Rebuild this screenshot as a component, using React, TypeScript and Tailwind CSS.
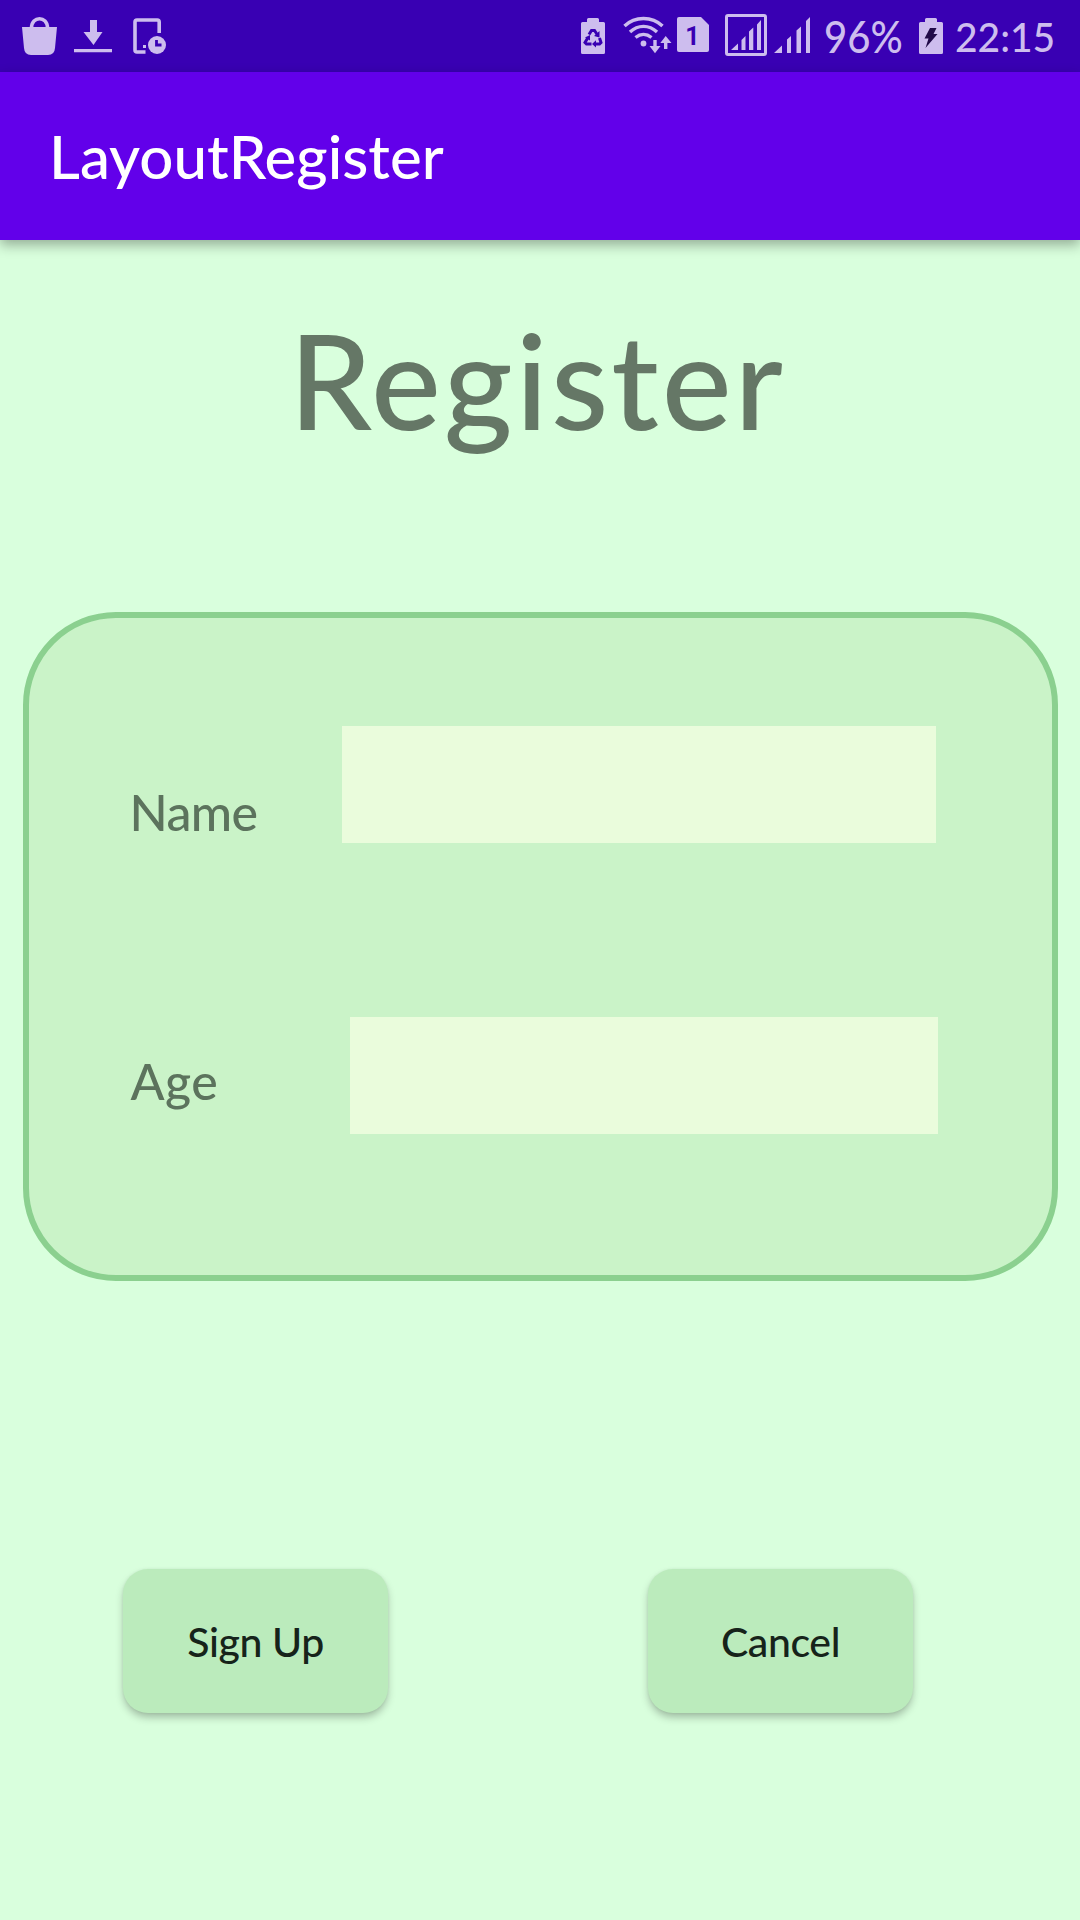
import type { ReactNode } from "react";

// Every status icon shares the bar's 72px height; x and w give its horizontal span.
function StatusIcon({ x, w, className = "", children }: { x: number; w: number; className?: string; children: ReactNode }) {
  return (
    <svg width={w} height={72} viewBox={`${x} 0 ${w} 72`} fill="currentColor" className={`shrink-0 ${className}`} aria-hidden="true">
      {children}
    </svg>
  );
}

const BATTERY = "M587 19.5Q587 18 588.500 18H597.500Q599 18 599 19.500V22H603.500Q605 22 605 23.500V52.500Q605 54 603.500 54H582.500Q581 54 581 52.500V23.500Q581 22 582.500 22H587Z";

function StatusBar() {
  return (
    <header className="flex h-[72px] shrink-0 items-center bg-[#3900b3] text-[#cdbdee]">
      <StatusIcon x={22} w={35} className="ml-[22px]">
        <path d="M22 27H57L55 48Q54.500 55 48 55H31Q24.500 55 24 48Z" />
        <path d="M31.500 28C31.500 15.500 47.500 15.500 47.500 28" fill="none" stroke="currentColor" strokeWidth="3.500" />
      </StatusIcon>
      <StatusIcon x={74} w={38} className="ml-[17px]">
        <path d="M90 20H97V32H102.500L93.500 45L83.500 32H90ZM74 49H112V52.300H74Z" />
      </StatusIcon>
      <StatusIcon x={133} w={33} className="ml-[21px]">
        <path d="M159.200 33V22Q159.200 20 157.200 20H137Q135 20 135 22V50Q135 52 137 52H145.500" fill="none" stroke="currentColor" strokeWidth="3.600" />
        <rect x="143" y="45" width="3" height="3" />
        <circle cx="157" cy="45" r="9" />
        <path d="M156.500 40V45H161.500" fill="none" stroke="#3900b3" strokeWidth="2.800" />
      </StatusIcon>

      <StatusIcon x={581} w={24} className="ml-auto">
        <path d={BATTERY} />
        <g fill="none" stroke="#3900b3" strokeWidth="3">
          <path d="M589 34.500L591.500 30.500H594.500L597.500 35" />
          <path d="M599.500 38L601 42.500L599.500 44H594.500" />
          <path d="M591.500 44H586.500L585 42.500L588 37.500" />
        </g>
        <path d="M599.500 31V37.500L594 36ZM596 40.300V47.500L592 44ZM585 37.500L590 35V40.500Z" fill="#3900b3" />
      </StatusIcon>
      <StatusIcon x={623} w={49} className="ml-[18px]">
        <g fill="none" stroke="currentColor" strokeWidth="3.400">
          <path d="M624.500 26C635 16 652 16 662.500 26" />
          <path d="M630 32C638 24.500 649 24.500 657 32" />
          <path d="M635.500 37.500C640.500 33.500 646.500 33.500 651.500 37.500" />
          <path d="M655 40V49M665.700 49V40" />
        </g>
        <circle cx="643.500" cy="43.500" r="2.900" />
        <path d="M649.500 46H660.500L655 53.200ZM660.300 43H671.500L665.700 36Z" />
      </StatusIcon>
      <StatusIcon x={677} w={32} className="ml-[5px]">
        <path d="M679 17H701L709 25V50Q709 52 707 52H679Q677 52 677 50V19Q677 17 679 17Z" />
        <text x="692.500" y="44.500" textAnchor="middle" fill="#3900b3" fontFamily="Roboto, sans-serif" fontWeight="700" fontSize="25">1</text>
      </StatusIcon>
      <StatusIcon x={725} w={42} className="ml-[16px]">
        <rect x="726.500" y="15.500" width="39" height="39" rx="1.500" fill="none" stroke="currentColor" strokeWidth="3" />
        <path d="M731 50L738 43.500V50ZM741.500 40L745.500 36V50H741.500ZM749 31.500L753.300 27.500V50H749ZM757 24.500L761 20V50H757Z" />
      </StatusIcon>
      <StatusIcon x={774} w={36} className="ml-[7px]">
        <path d="M774 53L782 45.500V53ZM787 39.500L791 36V53H787ZM796.500 30.500L801 26.500V53H796.500ZM806 21L810 17V53H806Z" />
      </StatusIcon>
      <span className="ml-[14px] w-[80px] text-[45px] leading-[45px] font-medium whitespace-nowrap">
        <span className="inline-block origin-left scale-x-[0.89]">96%</span>
      </span>
      <StatusIcon x={581} w={24} className="ml-[15px]">
        <path d={BATTERY} />
        <path d="M592 28H598.500L595.500 34H599.500L587.500 48L590.500 38.500H586.500Z" fill="#210b49" />
      </StatusIcon>
      <span className="mr-[23px] ml-[12px] w-[102px] text-[41px] leading-[41px] font-medium whitespace-nowrap">
        <span className="inline-block origin-left scale-x-[0.95]">22:15</span>
      </span>
    </header>
  );
}

function Field({ label, className, inputClassName, labelClassName }: { label: string; className: string; inputClassName: string; labelClassName: string }) {
  return (
    <label className={`flex h-[117px] items-center ${className}`}>
      <span className={`flex-1 text-[50px] leading-[50px] font-medium text-[#5c735d] ${labelClassName}`}>{label}</span>
      <input className={`h-full bg-[#eafcdc] px-4 text-[50px] text-[#1a251b] outline-none ${inputClassName}`} />
    </label>
  );
}

function ActionButton({ children }: { children: ReactNode }) {
  return (
    <button className="h-[144px] w-[265px] rounded-[25px] bg-[#bbebbc] text-[41px] leading-[41px] font-medium tracking-[-0.4px] text-[#16231a] shadow-[0_5px_8px_-1px_rgba(0,0,0,0.28),0_0_3px_rgba(0,0,0,0.06)]">
      {children}
    </button>
  );
}

export default function App() {
  return (
    <div className="flex h-[1920px] w-[1080px] flex-col overflow-hidden bg-[#d9ffdd] font-['Lato','Open_Sans',sans-serif]">
      <StatusBar />
      <div className="flex h-[168px] shrink-0 items-center bg-[#6200ea] pl-[49px] text-white shadow-[0_5px_12px_rgba(0,0,0,0.32)]">
        <span className="text-[60px] leading-[60px] font-medium">LayoutRegister</span>
      </div>
      <main className="flex flex-col">
        <h1 className="mt-[73px] pr-[5px] text-center text-[132px] leading-[132px] font-medium tracking-[3px] text-[#657766]">Register</h1>
        <section className="mx-auto mt-[167px] h-[669px] w-[1035px] rounded-[93px] border-[6px] border-[#8bd08f] bg-[#caf3c8] pt-[108px] pr-[115px] pl-[101px]">
          <Field label="Name" className="mr-[1px]" inputClassName="w-[594px]" labelClassName="translate-y-[27px] tracking-[-0.6px]" />
          <Field label="Age" className="mt-[174px] -mr-px" inputClassName="w-[588px]" labelClassName="translate-y-[5px] pl-[1px] tracking-[0.5px]" />
        </section>
        <div className="mt-[288px] flex justify-between pr-[167px] pl-[123px]">
          <ActionButton>Sign Up</ActionButton>
          <ActionButton>Cancel</ActionButton>
        </div>
      </main>
    </div>
  );
}
